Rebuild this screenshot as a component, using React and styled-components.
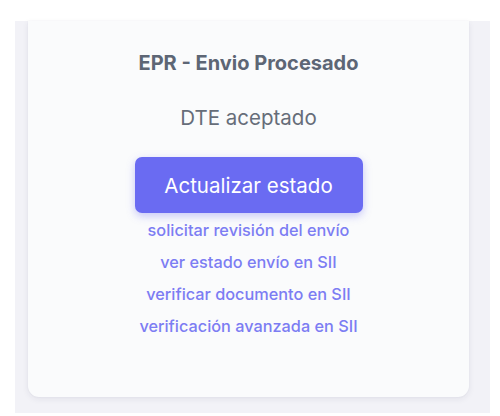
import React from "react";
import styled, { createGlobalStyle } from "styled-components";

const Global = createGlobalStyle`
  html, body { margin: 0; padding: 0; background: #ffffff; }
  body { font-family: Inter, "Noto Sans", sans-serif; }
`;

const Page = styled.div`
  width: 500px;
  height: 416px;
  padding-top: 21px;
  box-sizing: border-box;
`;

const Panel = styled.div`
  margin-left: 15px;
  width: 475px;
  height: 392px;
  background: #f2f2f7;
  padding: 0 21px 16px 13px;
  box-sizing: border-box;
`;

const Card = styled.div`
  height: 376px;
  background: #fafbfc;
  border-radius: 0 0 11px 11px;
  box-shadow: 0 2px 6px rgba(40, 40, 80, 0.08), 0 0 2px rgba(40, 40, 80, 0.06);
  display: flex;
  flex-direction: column;
  align-items: center;
  padding-top: 30px;
  box-sizing: border-box;
`;

const Title = styled.div`
  font-size: 20px;
  font-weight: 700;
  color: #5d6675;
  line-height: 24px;
`;

const Status = styled.div`
  margin-top: 31px;
  font-size: 20.5px;
  color: #666d79;
  line-height: 24px;
`;

const Button = styled.button`
  margin-top: 27px;
  width: 228px;
  height: 56px;
  border: none;
  border-radius: 7px;
  background: #6a6bf2;
  color: #ffffff;
  font-family: inherit;
  font-size: 20.5px;
  box-shadow: 0 3px 8px rgba(100, 100, 240, 0.35);
  cursor: pointer;
`;

const Links = styled.div`
  display: flex;
  flex-direction: column;
  align-items: center;
  margin-top: 7px;
  gap: 12px;
`;

const Link = styled.a`
  font-size: 16.3px;
  font-weight: 500;
  line-height: 20px;
  color: #7c7df3;
  text-decoration: none;
`;

const links = [
  "solicitar revisión del envío",
  "ver estado envío en SII",
  "verificar documento en SII",
  "verificación avanzada en SII",
];

export default function App() {
  return (
    <Page>
      <Global />
      <Panel>
        <Card>
          <Title>EPR - Envio Procesado</Title>
          <Status>DTE aceptado</Status>
          <Button>Actualizar estado</Button>
          <Links>
            {links.map((l) => (
              <Link key={l} href="#">{l}</Link>
            ))}
          </Links>
        </Card>
      </Panel>
    </Page>
  );
}
